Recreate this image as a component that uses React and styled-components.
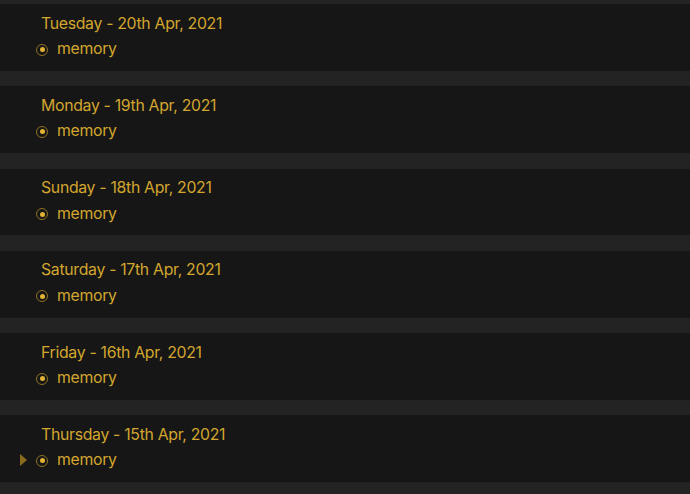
import React from "react";
import styled, { createGlobalStyle } from "styled-components";

const Global = createGlobalStyle`
  html, body {
    margin: 0;
    padding: 0;
    background: #232323;
  }
  body {
    font-family: Inter, "Noto Sans", sans-serif;
  }
`;

const Journal = styled.div`
  display: flex;
  flex-direction: column;
  gap: 15.6px;
  padding-top: 4px;
`;

const Day = styled.section`
  background: #161616;
  height: 66.7px;
  box-sizing: border-box;
  padding: 9.5px 0 0 41px;
`;

const Title = styled.div`
  color: #d3a62e;
  font-size: 15.8px;
  line-height: 20px;
  letter-spacing: -0.3px;
`;

const Block = styled.div`
  position: relative;
  display: flex;
  align-items: center;
  gap: 9px;
  margin-top: 5.5px;
  margin-left: -5px;
  color: #d3a62e;
  font-size: 15.8px;
  line-height: 20px;
  letter-spacing: -0.3px;
`;

const Toggle = styled.span`
  position: absolute;
  left: -16.5px;
  top: 3.5px;
  width: 0;
  height: 0;
  border-top: 6.5px solid transparent;
  border-bottom: 6.5px solid transparent;
  border-left: 7px solid #8a6c1f;
`;

const Bullet = styled.span`
  flex: none;
  width: 12px;
  height: 12px;
  margin-top: 1px;
  box-sizing: border-box;
  border-radius: 50%;
  border: 1.5px solid #8f7122;
  display: flex;
  align-items: center;
  justify-content: center;
  &::after {
    content: "";
    width: 5px;
    height: 5px;
    border-radius: 50%;
    background: #e2b232;
  }
`;

const days = [
  { title: "Tuesday - 20th Apr, 2021" },
  { title: "Monday - 19th Apr, 2021" },
  { title: "Sunday - 18th Apr, 2021" },
  { title: "Saturday - 17th Apr, 2021" },
  { title: "Friday - 16th Apr, 2021" },
  { title: "Thursday - 15th Apr, 2021", toggle: true },
];

export default function App() {
  return (
    <>
      <Global />
      <Journal>
        {days.map((d) => (
          <Day key={d.title}>
            <Title>{d.title}</Title>
            <Block>
              {d.toggle && <Toggle />}
              <Bullet />
              <span>memory</span>
            </Block>
          </Day>
        ))}
      </Journal>
    </>
  );
}
